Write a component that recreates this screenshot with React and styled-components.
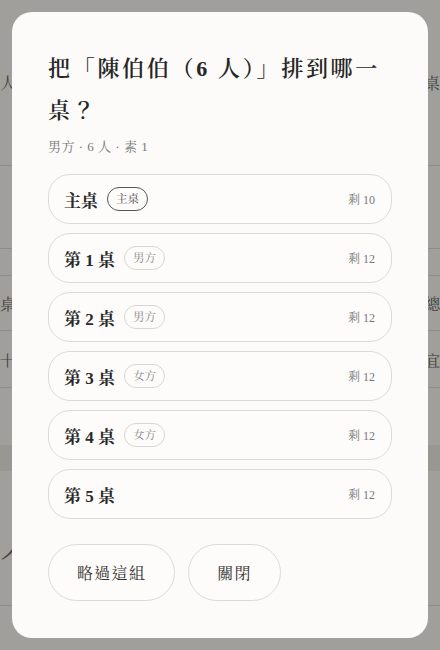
import React from "react";
import styled, { createGlobalStyle } from "styled-components";

const GlobalStyle = createGlobalStyle`
  html, body {
    margin: 0;
    padding: 0;
    width: 440px;
    height: 650px;
    overflow: hidden;
    background: #f6f5f1;
    font-family: "Liberation Serif", "Noto Serif CJK TC", "Noto Sans CJK TC", serif;
  }
  * { box-sizing: border-box; }
`;

const Page = styled.div`
  width: 440px;
  height: 650px;
  display: flex;
  flex-direction: column;
  color: #333;
`;

const BgRow = styled.div`
  height: ${(p) => p.h}px;
  display: flex;
  align-items: center;
  justify-content: space-between;
  border-bottom: ${(p) => (p.line ? "1px solid #d6d4cf" : "none")};
  background: ${(p) => (p.band ? "#e9e7e2" : "transparent")};
  font-size: 16px;
  color: #555;
`;

const BgText = styled.span`
  display: block;
  white-space: nowrap;
  font-size: ${(p) => p.size || 16}px;
`;

const Backdrop = styled.div`
  position: fixed;
  inset: 0;
  background: rgba(40, 40, 36, 0.42);
  display: flex;
  align-items: center;
  justify-content: center;
`;

const Modal = styled.div`
  width: 416px;
  height: 626px;
  background: #fcfbf9;
  border-radius: 20px;
  padding: 36px;
  display: flex;
  flex-direction: column;
`;

const Title = styled.h2`
  margin: 0;
  font-size: 22px;
  line-height: 42px;
  font-weight: 600;
  letter-spacing: 2.7px;
  color: #262626;
`;

const Sub = styled.div`
  margin-top: 4px;
  font-size: 13px;
  color: #777;
  letter-spacing: 0.5px;
`;

const List = styled.div`
  margin-top: 19px;
  display: flex;
  flex-direction: column;
  gap: 9px;
`;

const Card = styled.div`
  height: 50px;
  flex-shrink: 0;
  border: 1px solid #dddbd6;
  border-radius: 22px;
  padding: 0 16px 0 15px;
  display: flex;
  align-items: center;
  gap: 9px;
  background: #fdfcfa;
`;

const CardName = styled.span`
  font-size: 17px;
  font-weight: 700;
  color: #2a2a2a;
`;

const Badge = styled.span`
  font-size: 11.5px;
  color: ${(p) => (p.main ? "#444" : "#888")};
  border: 1px solid ${(p) => (p.main ? "#555" : "#d8d6d1")};
  border-radius: 999px;
  padding: 3px 8px;
  line-height: 16px;
`;

const Remain = styled.span`
  margin-left: auto;
  font-size: 12px;
  color: #777;
`;

const Actions = styled.div`
  margin-top: 25px;
  display: flex;
  gap: 13px;
`;

const Button = styled.button`
  height: 57px;
  padding: 0 28px;
  border: 1px solid #dddbd6;
  border-radius: 29px;
  background: #fdfcfa;
  font-family: inherit;
  font-size: 16px;
  color: #333;
  letter-spacing: 1.3px;
`;

const tables = [
  { name: "主桌", badge: "主桌", main: true, left: 10 },
  { name: "第 1 桌", badge: "男方", left: 12 },
  { name: "第 2 桌", badge: "男方", left: 12 },
  { name: "第 3 桌", badge: "女方", left: 12 },
  { name: "第 4 桌", badge: "女方", left: 12 },
  { name: "第 5 桌", left: 12 },
];

export default function App() {
  return (
    <>
      <GlobalStyle />
      <Page>
        <BgRow h={166} line>
          <BgText>人</BgText>
          <BgText>桌</BgText>
        </BgRow>
        <BgRow h={83} line />
        <BgRow h={27} line />
        <BgRow h={55} line>
          <BgText>桌</BgText>
          <BgText>總</BgText>
        </BgRow>
        <BgRow h={57} line>
          <BgText size={15}>十分</BgText>
          <BgText size={15}>不宜</BgText>
        </BgRow>
        <BgRow h={57} />
        <BgRow h={26} band />
        <BgRow h={135} line>
          <BgText size={40}>人</BgText>
          <BgText />
        </BgRow>
      </Page>
      <Backdrop>
        <Modal>
          <Title>把「陳伯伯（6 人）」排到哪一桌？</Title>
          <Sub>男方 · 6 人 · 素 1</Sub>
          <List>
            {tables.map((t) => (
              <Card key={t.name}>
                <CardName>{t.name}</CardName>
                {t.badge && <Badge main={t.main}>{t.badge}</Badge>}
                <Remain>剩 {t.left}</Remain>
              </Card>
            ))}
          </List>
          <Actions>
            <Button>略過這組</Button>
            <Button>關閉</Button>
          </Actions>
        </Modal>
      </Backdrop>
    </>
  );
}
